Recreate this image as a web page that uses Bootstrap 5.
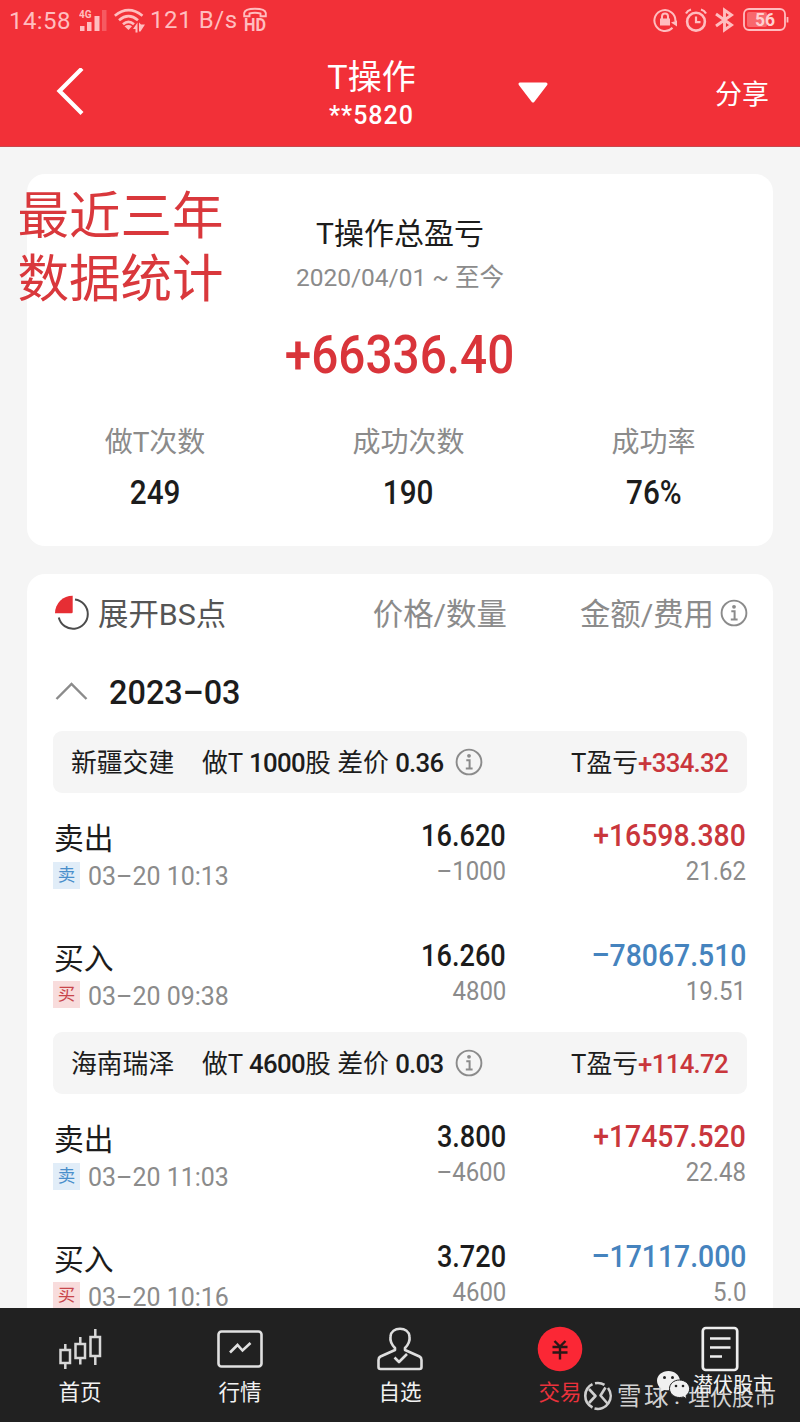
<!DOCTYPE html>
<html lang="zh-CN">
<head>
<meta charset="utf-8">
<meta name="viewport" content="width=device-width, initial-scale=1">
<title>T操作</title>
<link href="https://cdn.jsdelivr.net/npm/bootstrap@5.3.0/dist/css/bootstrap.min.css" rel="stylesheet">
<style>
  body { font-family: Roboto, "Noto Sans CJK SC", sans-serif; background: #f5f5f5; color: #1c1c1c; }
  .screen { width: 800px; height: 1422px; }
  svg { display: block; flex: none; }

  /* red header */
  .topbar { height: 147px; background: #f23038; border-bottom: 1px solid #c9474c; }
  .status { height: 40px; color: #ffbdbf; font-size: 24px; line-height: 40px; padding: 0 11px 0 9px; }
  .clock { width: 70px; letter-spacing: .4px; padding-top: 2px; }
  .speed { width: 93px; margin-left: 4px; letter-spacing: .6px; }
  .titlebar { display: grid; grid-template-columns: 243px 145px 1fr auto; align-items: center; height: 106px; padding: 0 31px 0 56px; }
  .title-main { font-size: 34px; line-height: 42px; }
  .title-sub { font-size: 25px; line-height: 30px; letter-spacing: 1px; margin-top: 3px; }
  .share { font-size: 27px; line-height: 36px; padding-top: 4px; }

  .panel { margin: 0 27px; background: #fff; border-radius: 18px; }
  .soft { color: #8b8b8b; }
  .up { color: #c9363c; }
  .down { color: #4583be; }

  /* condensed figures */
  .fig { display: inline-block; font-weight: 500; transform: scaleX(.9); white-space: nowrap; }
  .fig-l { transform-origin: left; }
  .fig-r { transform-origin: right; }

  /* summary */
  .summary { height: 372px; margin-top: 27px; }
  .sum-title { font-size: 30px; line-height: 40px; padding-top: 40px; }
  .sum-range { font-size: 24.5px; line-height: 36px; margin-top: 6px; }
  .sum-total { font-size: 53px; line-height: 60px; margin-top: 29px; color: #d9343a; }
  .stats { display: grid; grid-template-columns: 256px 251px 239px; margin-top: 38px; }
  .stats .lbl { font-size: 28px; line-height: 40px; }
  .stats .val { font-size: 33px; line-height: 40px; margin-top: 10px; }
  .note { left: 17.500px; top: 186px; font-size: 51.5px; line-height: 62.500px; color: #d9383c; }

  /* records */
  .records { height: 734px; margin-top: 28px; padding: 0 27px; border-radius: 18px 18px 0 0; }
  .rec-head { height: 78px; font-size: 30.4px; margin-right: -2px; }
  .rec-head span { padding-top: 4px; }
  .month { height: 79px; font-size: 34px; }
  .month .fig { transform: scaleX(.955); padding-top: 2px; }
  .deal { height: 62px; border-radius: 9px; background: #f5f5f5; font-size: 25.8px; margin: 0 -1px; padding: 3px 19px 0 18px; white-space: pre; }
  .deal svg { margin: -3px 0 0 11px; }
  .deal b { font-weight: 500; letter-spacing: -.7px; }
  .entry { height: 119.5px; padding-top: 23px; }
  .side { font-size: 29.8px; line-height: 42px; margin-top: 2px; }
  .price { font-size: 31px; line-height: 40px; }
  .price .fig { transform: scaleX(.875); }
  .amount .fig { transform: scaleX(.915); }
  .minor { font-size: 25.5px; line-height: 30px; font-weight: 400; transform: scaleX(.94); }
  .when { font-size: 26px; line-height: 32px; font-weight: 400; transform: scaleX(.96); }
  .tag { width: 27px; height: 27px; font-size: 17.5px; line-height: 27px; text-align: center; margin: -2px 8px 0 -1px; }
  .tag-sell { background: #e1edf8; color: #4a8fcb; }
  .tag-buy { background: #f8dcdc; color: #c8464b; }
  .mid { width: 240px; }

  /* bottom tabs */
  .tabs { height: 114px; background: #212121; color: #f2f2f2; font-size: 21.5px; line-height: 30px; }
  .tabs .tab { width: 160px; padding-top: 18px; }
  .tab .ico { height: 46px; margin-bottom: 6px; }
  .mark-a { left: 583px; top: 1380px; height: 31px; color: #d2d2d2; font-size: 24.500px; line-height: 31px; }
  .mark-b { left: 656px; top: 1369px; height: 32px; color: #f3f3f3; font-size: 20px; line-height: 34px; }
</style>
</head>
<body>
<svg width="0" height="0" class="position-absolute">
  <symbol id="info" viewBox="0 0 28 28">
    <circle cx="14" cy="14" r="12.4" fill="none" stroke="currentColor" stroke-width="1.9"/>
    <circle cx="14" cy="7.8" r="1.9" fill="currentColor"/>
    <path d="M11.3 12.2H14.6V20.3M10.8 20.5H17.6" fill="none" stroke="currentColor" stroke-width="2"/>
  </symbol>
</svg>

<div class="screen position-relative overflow-hidden d-flex flex-column">

  <header class="topbar text-white">
    <div class="status d-flex align-items-center">
      <span class="clock">14:58</span>
      <svg width="29" height="24" viewBox="0 0 29 24" fill="#ffbdbf">
        <text x="0" y="9.500" font-size="10" font-weight="700">4G</text>
        <rect x="1" y="18" width="4.500" height="5"/><rect x="8" y="14" width="4.500" height="9"/>
        <rect x="15.500" y="8" width="5" height="15"/><rect x="23" y="2" width="4.500" height="21" opacity=".3"/>
      </svg>
      <svg style="margin-left:6px" width="32" height="26" viewBox="0 0 32 26" fill="none" stroke="#ffbdbf" stroke-width="2.700">
        <path d="M.8 8.800Q14.500-2.500 28.500 8.800M5 13.200Q14.500 5 24 13.200M9 17.200Q14.500 12.500 20 17.200"/>
        <path d="M10.500 19.300Q14.500 16.500 18 19.300L14.500 23Z" fill="#ffbdbf" stroke="none"/>
        <path d="M19 22L23.500 15.500V25.500H21.500V22ZM25 15.500L27 17.500H31L26.500 24.500H25Z" fill="#ffbdbf" stroke="none"/>
      </svg>
      <span class="speed">121 B/s</span>
      <svg width="24" height="26" viewBox="0 0 24 26" fill="#ffbdbf">
        <path d="M1.200 9.300V6Q2 1.800 12 1.800T22.800 6V9.300H17.500V6.500Q12 5 6.500 6.500V9.300Z" fill="none" stroke="#ffbdbf" stroke-width="1.900"/>
        <text x="1" y="24" font-size="17.500" font-weight="700" textLength="22" lengthAdjust="spacingAndGlyphs" style="line-height:18px">HD</text>
      </svg>
      <div class="d-flex align-items-center ms-auto">
        <svg width="24" height="26" viewBox="0 0 24 26" fill="none" stroke="#ffbdbf" stroke-width="2">
          <path d="M19.500 20.800A10.500 10.500 0 1 1 22.400 14"/><path d="M18 15.500L24 13.500V19.500Z" fill="#ffbdbf" stroke="none"/>
          <rect x="7" y="11.500" width="10" height="7" fill="#ffbdbf" stroke="none"/><path d="M9 12V9.500a3 3 0 0 1 6 0V12"/>
        </svg>
        <svg style="margin-left:8px" width="22" height="26" viewBox="0 0 22 26" fill="none" stroke="#ffbdbf" stroke-width="2.600">
          <circle cx="11" cy="14.700" r="8.900"/><path d="M11 9.500V15.200H15.500" stroke-width="2.200"/><path d="M1 6.500Q2.500 3.500 6 2.500M21 6.500Q19.500 3.500 16 2.500" stroke-width="2.200"/>
        </svg>
        <svg style="margin-left:8px" width="19" height="26" viewBox="0 0 19 26" fill="none" stroke="#ffbdbf" stroke-width="2.900">
          <path d="M1 7L16.500 18L9.500 23V3L16.500 8L1 19"/>
        </svg>
        <svg style="margin-left:9px" width="46" height="24" viewBox="0 0 46 24" fill="none" stroke="#ffbdbf" stroke-width="1.800">
          <rect x="1" y="1" width="41" height="21" rx="5"/><rect x="4" y="4" width="20" height="15" rx="2" fill="#f8686d" stroke="none"/>
          <path d="M44.500 9V14.500"/><text x="12" y="18" font-size="17.500" font-weight="700" fill="#ffcfd0" stroke="none">56</text>
        </svg>
      </div>
    </div>
    <div class="titlebar">
      <svg width="30" height="50" viewBox="0 0 30 50" fill="none" stroke="#fff" stroke-width="4.200"><path d="M26 1.500L3.500 24L26 46.500" transform="translate(0 -1)"/></svg>
      <div class="text-center">
        <div class="title-main">T操作</div>
        <div class="title-sub fw-medium">**5820</div>
      </div>
      <svg width="32" height="22" viewBox="0 0 32 22" style="margin-left:73px"><path d="M3 2H29L16 19Z" fill="#fff" stroke="#fff" stroke-width="3" stroke-linejoin="round"/></svg>
      <span class="share">分享</span>
    </div>
  </header>

  <section class="panel summary text-center">
    <div class="sum-title">T操作总盈亏</div>
    <div class="sum-range soft">2020/04/01 ~ 至今</div>
    <div class="sum-total"><span class="fig">+66336.40</span></div>
    <div class="stats">
      <div><div class="lbl soft">做T次数</div><div class="val"><span class="fig">249</span></div></div>
      <div><div class="lbl soft">成功次数</div><div class="val"><span class="fig">190</span></div></div>
      <div><div class="lbl soft">成功率</div><div class="val"><span class="fig">76%</span></div></div>
    </div>
  </section>
  <div class="note position-absolute">最近三年<br>数据统计</div>

  <section class="panel records">
    <div class="rec-head d-flex align-items-center soft">
      <svg width="36" height="36" viewBox="0 0 36 36" fill="none">
        <path d="M21 4.500A14.700 14.700 0 1 1 4.800 22.500" stroke="#4c4c4c" stroke-width="2"/>
        <path d="M18.700 .8V17Q18.700 18.300 17.400 18.300H1A17.500 17.500 0 0 1 18.700 .8Z" fill="#e62e34"/>
      </svg>
      <span style="margin-left:8px;color:#555">展开BS点</span>
      <span class="ms-auto">价格/数量</span>
      <span style="margin-left:73px">金额/费用</span>
      <svg style="margin-left:6px" width="28" height="28"><use href="#info"/></svg>
    </div>
    <div class="month d-flex align-items-center">
      <svg width="36" height="22" viewBox="0 0 36 22" fill="none" stroke="#8b8b8b" stroke-width="2.400"><path d="M2.500 18L17.500 3L32.500 18"/></svg>
      <span class="fig fig-l" style="margin-left:19px">2023–03</span>
    </div>

    <div class="deal d-flex align-items-center"><span style="width:131px">新疆交建</span><span>做T <b>1000</b>股 差价 <b>0.36</b></span><svg class="soft" width="28" height="28"><use href="#info"/></svg><span class="ms-auto">T盈亏<b class="up">+334.32</b></span></div>
    <div class="entry d-flex">
      <div><div class="side">卖出</div><div class="d-flex align-items-center"><span class="tag tag-sell">卖</span><span class="fig fig-l when soft">03–20 10:13</span></div></div>
      <div class="ms-auto text-end"><div class="price"><span class="fig fig-r">16.620</span></div><span class="fig fig-r minor soft">–1000</span></div>
      <div class="mid text-end"><div class="price amount up"><span class="fig fig-r">+16598.380</span></div><span class="fig fig-r minor soft">21.62</span></div>
    </div>
    <div class="entry d-flex">
      <div><div class="side">买入</div><div class="d-flex align-items-center"><span class="tag tag-buy">买</span><span class="fig fig-l when soft">03–20 09:38</span></div></div>
      <div class="ms-auto text-end"><div class="price"><span class="fig fig-r">16.260</span></div><span class="fig fig-r minor soft">4800</span></div>
      <div class="mid text-end"><div class="price amount down"><span class="fig fig-r">–78067.510</span></div><span class="fig fig-r minor soft">19.51</span></div>
    </div>

    <div class="deal d-flex align-items-center"><span style="width:131px">海南瑞泽</span><span>做T <b>4600</b>股 差价 <b>0.03</b></span><svg class="soft" width="28" height="28"><use href="#info"/></svg><span class="ms-auto">T盈亏<b class="up">+114.72</b></span></div>
    <div class="entry d-flex">
      <div><div class="side">卖出</div><div class="d-flex align-items-center"><span class="tag tag-sell">卖</span><span class="fig fig-l when soft">03–20 11:03</span></div></div>
      <div class="ms-auto text-end"><div class="price"><span class="fig fig-r">3.800</span></div><span class="fig fig-r minor soft">–4600</span></div>
      <div class="mid text-end"><div class="price amount up"><span class="fig fig-r">+17457.520</span></div><span class="fig fig-r minor soft">22.48</span></div>
    </div>
    <div class="entry d-flex">
      <div><div class="side">买入</div><div class="d-flex align-items-center"><span class="tag tag-buy">买</span><span class="fig fig-l when soft">03–20 10:16</span></div></div>
      <div class="ms-auto text-end"><div class="price"><span class="fig fig-r">3.720</span></div><span class="fig fig-r minor soft">4600</span></div>
      <div class="mid text-end"><div class="price amount down"><span class="fig fig-r">–17117.000</span></div><span class="fig fig-r minor soft">5.0</span></div>
    </div>
  </section>

  <nav class="tabs d-flex text-center">
    <div class="tab d-flex flex-column align-items-center">
      <svg class="ico" width="46" viewBox="0 0 46 46" fill="none" stroke="#d8d8d8" stroke-width="2.500">
        <rect x="3.500" y="24" width="9.500" height="13"/><path d="M8.300 18V24M8.300 37V43"/>
        <rect x="18.500" y="18" width="9.500" height="14"/><path d="M23.300 11V18M23.300 32V38.500"/>
        <rect x="33.500" y="11" width="9.500" height="19"/><path d="M38.300 3V11M38.300 30V39"/>
      </svg>首页</div>
    <div class="tab d-flex flex-column align-items-center">
      <svg class="ico" width="46" viewBox="0 0 46 46" fill="none" stroke="#e0e0e0" stroke-width="2.600">
        <rect x="1.500" y="5.500" width="43" height="35" rx="3"/><path d="M13 26.500L20.500 19L25.500 24.500L33.500 17"/>
      </svg>行情</div>
    <div class="tab d-flex flex-column align-items-center">
      <svg class="ico" width="48" viewBox="0 0 48 46" fill="none" stroke="#dedede" stroke-width="2.600" stroke-linejoin="round">
        <path d="M19 22C15 18 14 14 14.500 10.500C15 5.500 19 2.800 24 2.800S33 5.500 33.500 10.500C34 14 33 18 29 22V24L43.500 30.500Q45.500 31.500 45.500 34V41Q45.500 43 43.500 43H4.500Q2.500 43 2.500 41V34Q2.500 31.500 4.500 30.500L19 24Z"/><path d="M18.500 31.500L23 36L31 28"/>
      </svg>自选</div>
    <div class="tab d-flex flex-column align-items-center" style="color:#e9323c">
      <svg class="ico" width="46" viewBox="0 0 46 46"><circle cx="23" cy="23" r="22.300" fill="#fb2735"/>
        <path d="M17.500 15L23 20.500L28.500 15M15.500 21H30.500M15.500 26.500H30.500M23 20.500V33.500" fill="none" stroke="#2b1717" stroke-width="2.400"/></svg>交易</div>
    <div class="tab d-flex flex-column align-items-center">
      <svg class="ico" width="40" viewBox="0 0 40 46" fill="none" stroke="#eee" stroke-width="2.700">
        <rect x="2.800" y="2" width="34.400" height="42" rx="3"/><path d="M10 12.500H30.500M10 21.500H30.500M10 30.500H22"/></svg></div>
  </nav>

  <div class="mark-a position-absolute d-flex align-items-center">
    <svg width="30" height="30" viewBox="0 0 30 30" fill="none" stroke="#cfcfcf" stroke-width="2.600">
      <path d="M9.500 3.200A13 13 0 0 0 9.500 26.500M12 2.300A13 13 0 0 1 21.500 3.800M25 7A13 13 0 0 1 11.500 27.500"/><path d="M6 8L12.500 15L6 22M22.500 6.500L17.500 14.500L24.500 22.500" stroke-linejoin="round"/>
    </svg>
    <span style="margin:2px 0 0 4px;letter-spacing:2.500px">雪球</span><span style="margin-left:3px;width:14px">:</span><span style="margin-top:3px;font-size:22px">埋伏股市</span>
  </div>
  <div class="mark-b position-absolute d-flex align-items-center">
    <svg width="36" height="32" viewBox="0 0 36 32" fill="#f0f0f0">
      <path d="M12.500 2C6 2 1 6.300 1 11.700C1 15 2.700 17.600 5.400 19.400L4.200 23L8.500 20.900Q13 22 17 20.500Q24 18 24 11.500C23.500 6 18.500 2 12.500 2Z"/>
      <path d="M23.500 11C17.600 11 13.500 15 13.500 19.700S17.800 28.500 23.500 28.500Q25.500 28.500 27.400 27.900L31 30L30 26.600C32.300 25 33.600 22.600 33.600 19.700C33.600 15 29 11 23.500 11Z" stroke="#212121"/>
      <g fill="#222"><circle cx="8.500" cy="8.500" r="1.500"/><circle cx="16.500" cy="8.500" r="1.500"/><circle cx="20" cy="17" r="1.300"/><circle cx="27" cy="17" r="1.300"/></g>
    </svg>
    <span style="margin-left:1px">潜伏股市</span>
  </div>
</div>
<script src="https://cdn.jsdelivr.net/npm/bootstrap@5.3.0/dist/js/bootstrap.bundle.min.js"></script>
</body>
</html>
